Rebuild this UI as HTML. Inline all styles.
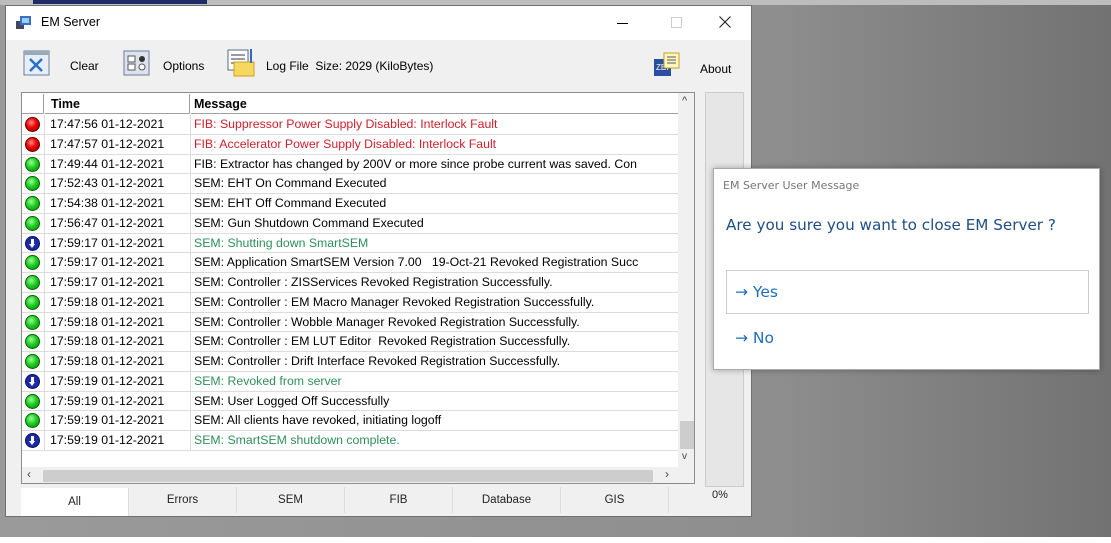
<!DOCTYPE html>
<html><head><style>
*{margin:0;padding:0;box-sizing:border-box}
body{width:1111px;height:543px;overflow:hidden;position:relative;font-family:"Liberation Sans",Arial,sans-serif;background:linear-gradient(90deg,#9a9a9a 0%,#8e8e8e 70%,#727272 100%);}
.top{position:absolute;left:0;top:0;width:1111px;height:5px;background:#bdbdbd}
.topbar{position:absolute;left:33px;top:0;width:174px;height:4px;background:#1f2a66}
.bot{position:absolute;left:0;top:537px;width:1111px;height:6px;background:#fff}
.win{position:absolute;left:5px;top:5px;width:747px;height:512px;background:#f0f0f0;border:1px solid #707070}
.title{position:absolute;left:0;top:0;width:745px;height:34px;background:#fff}
.abs{position:absolute}
.t12{font-size:12px;color:#000}
.list{position:absolute;left:15px;top:86px;width:674px;height:392px;background:#fff;border:1px solid #8c8c8c;overflow:hidden}
.hdr{position:absolute;top:1px;height:20px;font-weight:bold;font-size:12.5px;line-height:20px;border-bottom:1px solid #a0a0a0;background:#fff}
.row{position:absolute;left:0;width:656px;height:19.8px;border-bottom:1px solid #dcdcdc;font-size:12.3px;line-height:19px}
.row .ic{position:absolute;left:3px;top:2px;width:15px;height:15px;border-radius:50%}
.row .tm{position:absolute;left:28px}
.row .ms{position:absolute;left:172px;white-space:nowrap}
.row .s1{position:absolute;left:22px;top:0;width:1px;height:20px;background:#dcdcdc}
.row .s2{position:absolute;left:168px;top:0;width:1px;height:20px;background:#dcdcdc}
.g{background:radial-gradient(circle at 40% 35%,#9f9,#2c2 45%,#080 100%);border:1px solid #060}
.r{background:radial-gradient(circle at 40% 35%,#f88,#e00 45%,#800 100%);border:1px solid #600}
.b{background:#1c2aa8;border:1px solid #0a1060}
.b::after{content:"";position:absolute;left:5px;top:2px;width:3px;height:6px;background:#fff}
.b::before{content:"";position:absolute;left:3px;top:7px;border-left:3.5px solid transparent;border-right:3.5px solid transparent;border-top:4px solid #fff}
.red{color:#d0202a}.grn{color:#2f8f5a}
.tab{position:absolute;top:481px;height:26px;font-size:11.5px;line-height:28px;text-align:center;color:#222;border-right:1px solid #ddd}
.dlg{position:absolute;left:713px;top:168px;width:387px;height:202px;background:#fff;border:1px solid #aaa;box-shadow:0 0 6px rgba(0,0,0,.3)}
.seg{font-family:"DejaVu Sans","Liberation Sans",sans-serif}
</style></head><body>
<div class="top"></div><div class="topbar"></div>
<div class="win">
 <div class="title">
  <svg class="abs" style="left:10px;top:9px" width="16" height="15"><rect x="0" y="6" width="8" height="8" fill="#446"/><rect x="4" y="1" width="11" height="9" fill="#3a6fc0"/><rect x="6" y="3" width="7" height="5" fill="#9cf"/></svg>
  <div class="abs t12" style="left:35px;top:9px;font-size:12.5px">EM Server</div>
  <div class="abs" style="left:611px;top:17px;width:11px;height:1px;background:#000"></div>
  <div class="abs" style="left:665px;top:11px;width:11px;height:11px;border:1px solid #ccc"></div>
  <svg class="abs" style="left:713px;top:10px" width="12" height="12"><path d="M0.5 0.5L11.5 11.5M11.5 0.5L0.5 11.5" stroke="#222" stroke-width="1.1"/></svg>
 </div>
 <svg class="abs" style="left:17px;top:44px" width="28" height="26"><rect x="1" y="1" width="25" height="24" fill="#e8eef8" stroke="#6a7d9a"/><rect x="1" y="1" width="25" height="4" fill="#9ab"/><path d="M7 9 L19 21 M19 9 L7 21" stroke="#2a6fc8" stroke-width="2.5"/></svg>
 <div class="abs t12" style="left:64px;top:53px">Clear</div>
 <svg class="abs" style="left:117px;top:44px" width="28" height="26"><rect x="1" y="1" width="25" height="24" fill="#dde3ec" stroke="#6a7d9a"/><rect x="5" y="6" width="7" height="6" fill="#fff" stroke="#555"/><rect x="5" y="14" width="7" height="6" fill="#fff" stroke="#555"/><circle cx="19" cy="9" r="3" fill="#333"/><circle cx="19" cy="17" r="3" fill="#fff" stroke="#555"/></svg>
 <div class="abs t12" style="left:157px;top:53px">Options</div>
 <svg class="abs" style="left:220px;top:42px" width="32" height="30"><rect x="2" y="2" width="20" height="20" fill="#fff" stroke="#5a6a80"/><path d="M5 7h14M5 11h14M5 15h14" stroke="#335"/><rect x="8" y="14" width="20" height="14" fill="#f6d860" stroke="#c9a020"/><path d="M25 1v14" stroke="#36c" stroke-width="2"/></svg>
 <div class="abs t12" style="left:260px;top:53px">Log File&nbsp; Size: 2029 (KiloBytes)</div>
 <svg class="abs" style="left:647px;top:46px" width="28" height="26"><rect x="1" y="7" width="17" height="17" fill="#2a4fa0"/><text x="3" y="18" font-size="8" fill="#fff" font-family="Liberation Sans">ZEI</text><rect x="11" y="1" width="15" height="15" fill="#fff8c0" stroke="#c9a020"/><path d="M14 5h9M14 8h9M14 11h9" stroke="#555"/></svg>
 <div class="abs t12" style="left:694px;top:56px">About</div>

 <div class="list">
  <div class="hdr" style="left:0;width:22px;border-right:1px solid #a0a0a0"></div>
  <div class="hdr" style="left:23px;width:145px;padding-left:6px;border-right:1px solid #a0a0a0">Time</div>
  <div class="hdr" style="left:169px;width:488px;padding-left:3px">Message</div>
  <div id="rows"></div>
  <div class="abs" style="left:656px;top:0;width:17px;height:375px;background:#f0f0f0"></div>
  <div class="abs" style="left:660px;top:2px;font-size:11px;color:#444">^</div>
  <div class="abs" style="left:658px;top:328px;width:14px;height:28px;background:#cdcdcd"></div>
  <div class="abs" style="left:660px;top:358px;font-size:10px;color:#444">v</div>
  <div class="abs" style="left:0;top:374px;width:673px;height:17px;background:#f0f0f0"></div>
  <div class="abs" style="left:5px;top:374px;font-size:12px;color:#444">‹</div>
  <div class="abs" style="left:21px;top:377px;width:610px;height:12px;background:#cdcdcd"></div>
  <div class="abs" style="left:643px;top:374px;font-size:12px;color:#444">›</div>
 </div>

 <div class="tab" style="left:15px;width:108px;background:#fff;top:482px;height:28px">All</div>
 <div class="tab" style="left:123px;width:108px;line-height:26px">Errors</div>
 <div class="tab" style="left:231px;width:108px;line-height:26px">SEM</div>
 <div class="tab" style="left:339px;width:108px;line-height:26px">FIB</div>
 <div class="tab" style="left:447px;width:108px;line-height:26px">Database</div>
 <div class="tab" style="left:555px;width:108px;line-height:26px">GIS</div>
 <div class="abs" style="left:699px;top:86px;width:39px;height:395px;background:#e6e6e6;border:1px solid #ccc"></div>
 <div class="abs" style="left:706px;top:483px;font-size:11px;color:#222">0%</div>
</div>

<div class="dlg">
 <div class="abs seg" style="left:9px;top:10px;font-size:11px;color:#777">EM Server User Message</div>
 <div class="abs seg" style="left:12px;top:47px;font-size:15.2px;color:#1f4e85">Are you sure you want to close EM Server ?</div>
 <div class="abs" style="left:12px;top:101px;width:363px;height:44px;border:1px solid #ccc"></div>
 <div class="abs seg" style="left:21px;top:114px;font-size:15.5px;color:#1f6fb8">→ Yes</div>
 <div class="abs seg" style="left:21px;top:160px;font-size:15.5px;color:#1f6fb8">→ No</div>
</div>
<div class="bot"></div>

<script>
var d=[["r","17:47:56 01-12-2021","FIB: Suppressor Power Supply Disabled: Interlock Fault","red"],
["r","17:47:57 01-12-2021","FIB: Accelerator Power Supply Disabled: Interlock Fault","red"],
["g","17:49:44 01-12-2021","FIB: Extractor has changed by 200V or more since probe current was saved. Con",""],
["g","17:52:43 01-12-2021","SEM: EHT On Command Executed",""],
["g","17:54:38 01-12-2021","SEM: EHT Off Command Executed",""],
["g","17:56:47 01-12-2021","SEM: Gun Shutdown Command Executed",""],
["b","17:59:17 01-12-2021","SEM: Shutting down SmartSEM","grn"],
["g","17:59:17 01-12-2021","SEM: Application SmartSEM Version 7.00&nbsp;&nbsp; 19-Oct-21 Revoked Registration Succ",""],
["g","17:59:17 01-12-2021","SEM: Controller : ZISServices Revoked Registration Successfully.",""],
["g","17:59:18 01-12-2021","SEM: Controller : EM Macro Manager Revoked Registration Successfully.",""],
["g","17:59:18 01-12-2021","SEM: Controller : Wobble Manager Revoked Registration Successfully.",""],
["g","17:59:18 01-12-2021","SEM: Controller : EM LUT Editor&nbsp; Revoked Registration Successfully.",""],
["g","17:59:18 01-12-2021","SEM: Controller : Drift Interface Revoked Registration Successfully.",""],
["b","17:59:19 01-12-2021","SEM: Revoked from server","grn"],
["g","17:59:19 01-12-2021","SEM: User Logged Off Successfully",""],
["g","17:59:19 01-12-2021","SEM: All clients have revoked, initiating logoff",""],
["b","17:59:19 01-12-2021","SEM: SmartSEM shutdown complete.","grn"]];
var h="";d.forEach(function(x,i){h+='<div class="row" style="top:'+(22+i*19.75)+'px"><div class="ic '+x[0]+'"></div><div class="s1"></div><div class="tm">'+x[1]+'</div><div class="s2"></div><div class="ms '+x[3]+'">'+x[2]+'</div></div>';});
document.getElementById("rows").innerHTML=h;
</script>
</body></html>
